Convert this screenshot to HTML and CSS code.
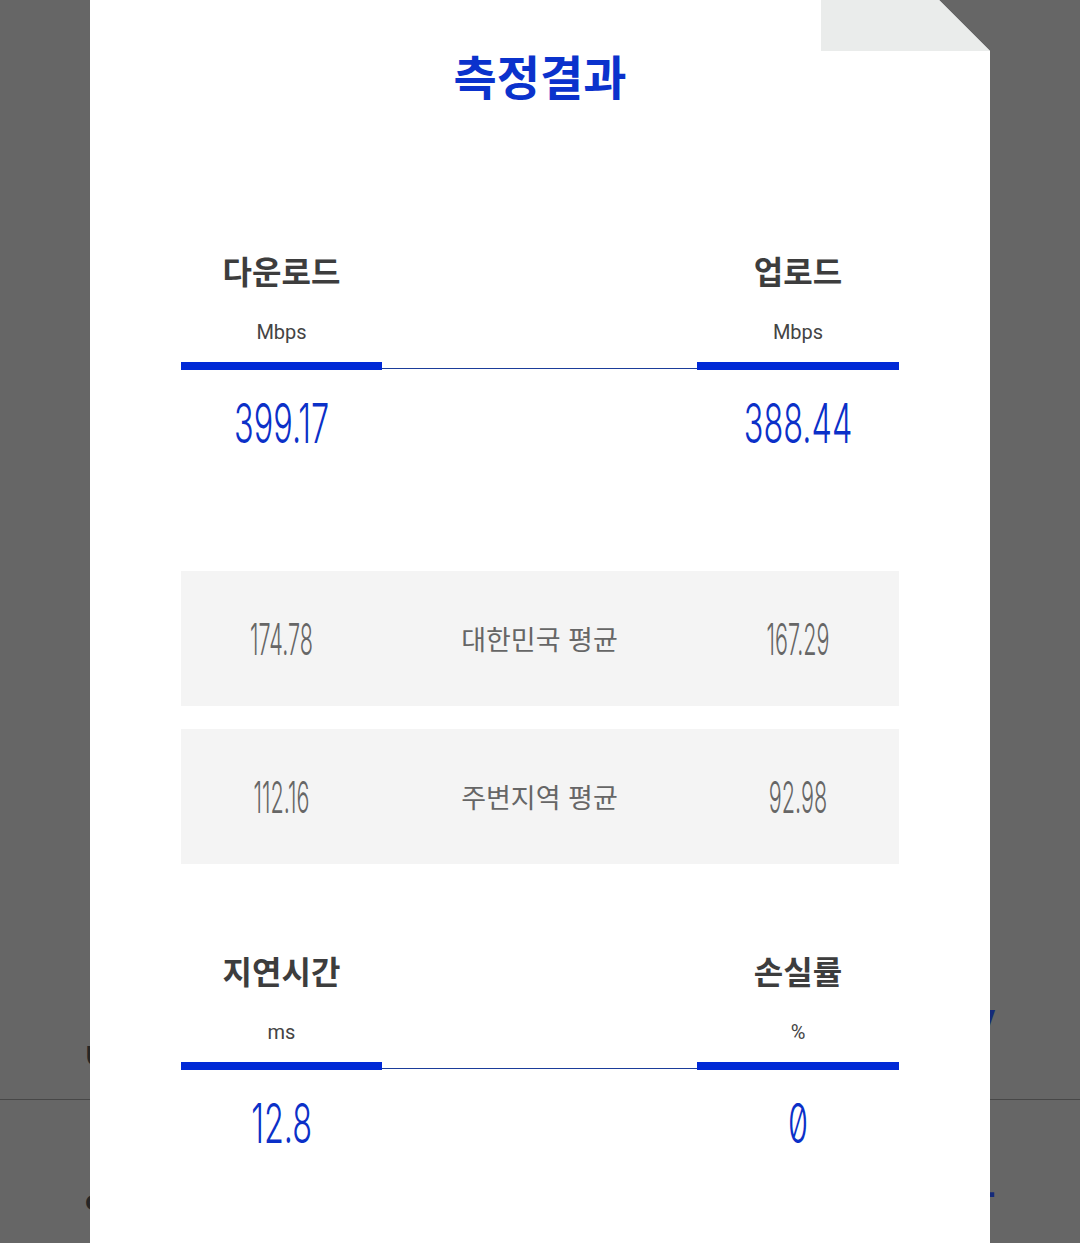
FILE: index.html
```html
<!DOCTYPE html>
<html lang="ko">
<head>
  <meta charset="UTF-8" />
  <title>측정결과</title>
  <link rel="stylesheet" href="styles.css">
</head>
<body>
  <div class="backdrop">
    <div class="bg-top">
      <span class="bg-left">U</span>
      <span class="bg-right">V</span>
    </div>
    <div class="bg-bottom">
      <span class="bg-left">c</span>
      <span class="bg-right bg-plus">+</span>
    </div>
  </div>

  <div class="modal">
    <div class="fold"></div>

    <h1 class="title">측정결과</h1>

    <div class="metric">
      <h2 class="left">다운로드</h2>
      <h2 class="right">업로드</h2>
      <p class="unit left">Mbps</p>
      <p class="unit right">Mbps</p>
      <div class="bar left"></div>
      <div class="line"></div>
      <div class="bar right"></div>
      <div class="value left"><span class="num">399.17</span></div>
      <div class="value right"><span class="num">388.44</span></div>
    </div>

    <div class="compare">
      <div class="compare-row">
        <span class="num">174.78</span>
        <span class="label">대한민국 평균</span>
        <span class="num">167.29</span>
      </div>
      <div class="compare-row">
        <span class="num">112.16</span>
        <span class="label">주변지역 평균</span>
        <span class="num">92.98</span>
      </div>
    </div>

    <div class="metric metric-second">
      <h2 class="left">지연시간</h2>
      <h2 class="right">손실률</h2>
      <p class="unit left">ms</p>
      <p class="unit right">%</p>
      <div class="bar left"></div>
      <div class="line"></div>
      <div class="bar right"></div>
      <div class="value left"><span class="num">12.8</span></div>
      <div class="value right"><span class="num">0</span></div>
    </div>
  </div>
</body>
</html>
```

FILE: styles.css
```css
body {
  margin: 0;
  height: 1243px;
  overflow: hidden;
  background: #666666;
  font-family: "Noto Sans CJK KR", "Noto Sans", sans-serif;
  position: relative;
}

/* page behind the dialog */
.backdrop {
  height: 1243px;
}

.bg-top {
  height: 1100px;
  box-sizing: border-box;
  border-bottom: 1px solid #474747;
  display: flex;
  justify-content: space-between;
  align-items: flex-end;
  padding: 0 0 30px 85px;
}

.bg-bottom {
  height: 143px;
  box-sizing: border-box;
  display: flex;
  justify-content: space-between;
  align-items: flex-start;
  padding: 84px 0 0 85px;
}

.bg-left {
  font-size: 26px;
  font-weight: 700;
  line-height: 30px;
  color: #262626;
}

.bg-right {
  font-family: "Inter", sans-serif;
  font-size: 36px;
  font-weight: 700;
  line-height: 40px;
  color: #142a7a;
  margin: 0 84px 26px 0;
}

.bg-plus {
  font-size: 60px;
  font-weight: 400;
  line-height: 60px;
  margin: -24px 80px 0 0;
}

/* dialog */
.modal {
  position: absolute;
  top: 0;
  left: 90px;
  width: 900px;
  height: 1243px;
  box-sizing: border-box;
  padding: 0 91px;
  background: #fff;
  clip-path: polygon(0 0, 849px 0, 900px 51px, 900px 100%, 0 100%);
}

.fold {
  position: absolute;
  top: 0;
  right: 0;
  width: 169px;
  height: 51px;
  background: #eaeceb;
}

.title {
  margin: 0;
  padding-top: 45px;
  line-height: 60px;
  font-size: 47px;
  font-weight: 700;
  text-align: center;
  color: #0b32cc;
}

.metric {
  display: grid;
  grid-template-columns: 201px 1fr 202px;
  margin-top: 145px;
  text-align: center;
}

.metric-second {
  margin-top: 86px;
}

.left {
  grid-column: 1;
}

.right {
  grid-column: 3;
}

.metric h2 {
  margin: 0;
  font-size: 32px;
  line-height: 40px;
  font-weight: 700;
  color: #3d3d3d;
}

.unit {
  margin: 30px 0 0;
  font-family: "Roboto", "Noto Sans", sans-serif;
  font-size: 20px;
  line-height: 24px;
  color: #444;
}

.bar {
  margin-top: 18px;
  height: 8px;
  background: #0029d6;
}

.line {
  grid-column: 2;
  align-self: end;
  height: 1px;
  margin-bottom: 1px;
  background: #1b3d9a;
}

.value {
  margin-top: 23px;
  line-height: 60px;
  height: 60px;
  color: #0b30c8;
}

.num {
  display: inline-block;
  font-family: "Inter", "Roboto", sans-serif;
  font-weight: 300;
  font-feature-settings: "zero" 1;
}

.value .num {
  font-size: 55px;
  transform: scaleX(0.59);
}

.compare {
  margin-top: 118px;
  display: flex;
  flex-direction: column;
  gap: 23px;
}

.compare-row {
  display: grid;
  grid-template-columns: 201px 1fr 202px;
  align-items: center;
  height: 135px;
  background: #f4f4f4;
  text-align: center;
  color: #666;
}

.compare-row .num {
  font-size: 44px;
  transform: scaleX(0.49);
}

.label {
  font-size: 27px;
  font-weight: 400;
  color: #666;
}
```
